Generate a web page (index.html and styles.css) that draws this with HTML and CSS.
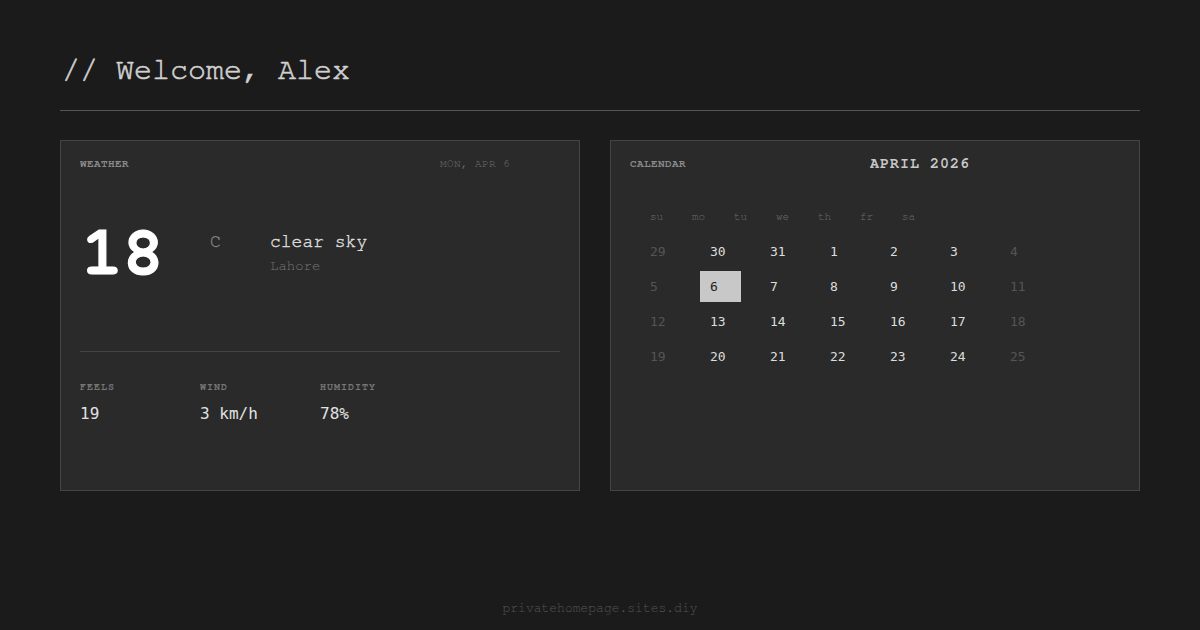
FILE: index.html
```html
<!DOCTYPE html>
<html>
<head>
<meta charset="utf-8">
<link rel="stylesheet" href="styles.css">
</head>
<body>
<div class="page">
  <h1 class="title">// Welcome, Alex</h1>
  <hr class="rule">
  <div class="cards">
    <section class="card weather">
      <div class="card-head weather-head">
        <span class="label">WEATHER</span>
        <span class="date">MON, APR 6</span>
      </div>
      <div class="now">
        <div class="temp">18</div>
        <div class="unit">C</div>
        <div class="desc">
          <div class="cond">clear sky</div>
          <div class="city">Lahore</div>
        </div>
      </div>
      <div class="divider"></div>
      <div class="stats">
        <div class="stat"><div class="stat-label">FEELS</div><div class="stat-val">19</div></div>
        <div class="stat"><div class="stat-label">WIND</div><div class="stat-val">3 km/h</div></div>
        <div class="stat"><div class="stat-label">HUMIDITY</div><div class="stat-val">78%</div></div>
      </div>
    </section>
    <section class="card calendar">
      <div class="card-head cal-head">
        <span class="label">CALENDAR</span>
        <span class="month">APRIL 2026</span>
      </div>
      <div class="weekdays">
        <span>su</span><span>mo</span><span>tu</span><span>we</span><span>th</span><span>fr</span><span>sa</span>
      </div>
      <div class="days">
        <span class="d dim">29</span><span class="d">30</span><span class="d">31</span><span class="d">1</span><span class="d">2</span><span class="d">3</span><span class="d dim">4</span>
        <span class="d dim">5</span><span class="d today">6</span><span class="d">7</span><span class="d">8</span><span class="d">9</span><span class="d">10</span><span class="d dim">11</span>
        <span class="d dim">12</span><span class="d">13</span><span class="d">14</span><span class="d">15</span><span class="d">16</span><span class="d">17</span><span class="d dim">18</span>
        <span class="d dim">19</span><span class="d">20</span><span class="d">21</span><span class="d">22</span><span class="d">23</span><span class="d">24</span><span class="d dim">25</span>
      </div>
    </section>
  </div>
  <footer class="foot">privatehomepage.sites.diy</footer>
</div>
</body>
</html>
```
FILE: styles.css
```css
* { box-sizing: border-box; }
html, body { margin: 0; padding: 0; }
body {
  background: #1b1b1b;
  color: #ddd;
  font-family: FreeMono, "Courier New", monospace;
  width: 1200px;
  height: 630px;
  overflow: hidden;
}
.page {
  padding: 50px 60px 0 60px;
  display: flex;
  flex-direction: column;
  height: 630px;
}
.title {
  margin: 0;
  font-size: 30px;
  font-weight: normal;
  line-height: 40px;
  color: #d0d0d0;
  padding-left: 2px;
  -webkit-text-stroke: 0.6px #d0d0d0;
}
.rule {
  border: 0;
  border-top: 1px solid #555;
  margin: 20px 0 29px 0;
  height: 0;
}
.cards {
  display: flex;
  gap: 30px;
}
.card {
  background: #2a2a2a;
  border: 1px solid #444;
  height: 351px;
  padding: 14px 19px 16px 19px;
}
.weather { width: 521px; }
.calendar { width: 531px; }
.card-head {
  display: flex;
  align-items: center;
  height: 16px;
}
.label {
  font-size: 11px;
  font-weight: bold;
  color: #8a8a8a;
  letter-spacing: 0.4px;
}
.weather-head .label { width: 360px; }
.date {
  font-size: 11px;
  color: #707070;
  letter-spacing: 0.4px;
}
.cal-head .label { width: 240px; }
.month {
  font-size: 15px;
  font-weight: bold;
  color: #c8c8c8;
  letter-spacing: 1px;
}
.now {
  display: flex;
  align-items: flex-start;
  margin-top: 54px;
  height: 126px;
}
.temp {
  font-size: 68px;
  font-weight: bold;
  color: #fff;
  line-height: 72px;
  width: 130px;
  padding-left: 2px;
  margin-top: -7px;
  -webkit-text-stroke: 1.2px #fff;
}
.unit {
  font-size: 18px;
  color: #888;
  width: 60px;
  margin-top: 8px;
  -webkit-text-stroke: 0.3px #888;
}
.desc { padding-top: 6px; }
.cond {
  font-size: 18px;
  color: #ddd;
  line-height: 22px;
  -webkit-text-stroke: 0.4px #ddd;
}
.city {
  font-size: 14px;
  color: #777;
  margin-top: 6px;
}
.divider {
  border-top: 1px solid #444;
}
.stats {
  display: flex;
  margin-top: 28px;
}
.stat { width: 120px; }
.stat-label {
  font-size: 10px;
  font-weight: bold;
  color: #777;
  letter-spacing: 1px;
  line-height: 14px;
}
.stat-val {
  font-family: "DejaVu Sans Mono", monospace;
  font-size: 16px;
  color: #e2e2e2;
  margin-top: 10px;
  line-height: 20px;
}
.weekdays {
  display: flex;
  margin-top: 38px;
  padding-left: 20px;
  font-size: 11px;
  color: #6e6e6e;
  line-height: 16px;
}
.weekdays span { width: 42px; }
.days {
  display: grid;
  grid-template-columns: repeat(7, 41px);
  column-gap: 19px;
  row-gap: 4px;
  margin-top: 11px;
  padding-left: 10px;
}
.d {
  font-family: "DejaVu Sans Mono", monospace;
  font-size: 13px;
  line-height: 15px;
  padding: 8px 10px;
  color: #ddd;
}
.d.dim { color: #555; }
.d.today {
  background: #c8c8c8;
  color: #222;
}
.foot {
  margin-top: auto;
  margin-bottom: 15px;
  text-align: center;
  font-size: 13px;
  color: #555;
}
```
